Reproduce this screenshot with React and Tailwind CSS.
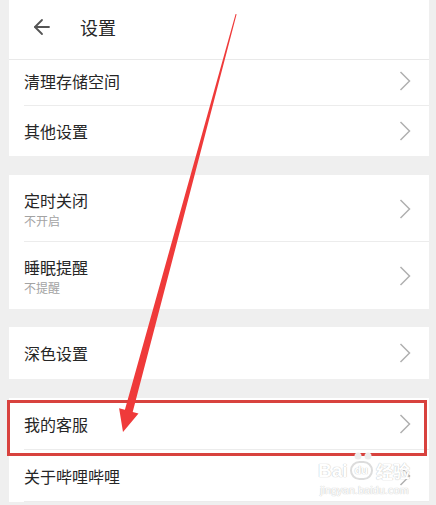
import { ArrowLeft } from "lucide-react";

const font = { fontFamily: '"Noto Sans CJK SC", "Noto Sans", sans-serif' };

const Chevron = () => (
  <svg width="12" height="20" viewBox="0 0 12 20" fill="none" className="shrink-0">
    <polyline points="1.5,1 10.5,10 1.5,19" stroke="#b0b0b0" strokeWidth="1.5" />
  </svg>
);

const Row = ({ title, sub, h, divider, pad = "" }) => (
  <div className={`relative flex items-center pl-[15px] pr-[18px] ${h} ${pad}`}>
    <div className="flex-1">
      <div className="text-[16px] leading-[22px] text-[#262626]">{title}</div>
      {sub && <div className="text-[12px] leading-[16px] mt-[2px] text-[#a3a3a3]">{sub}</div>}
    </div>
    <Chevron />
    {divider && <div className="absolute bottom-0 left-[15px] right-0 h-px bg-[#ececec]" />}
  </div>
);

export default function App() {
  return (
    <div className="relative h-[505px] overflow-hidden bg-[#efefef] pl-[9px] pr-[7px]" style={font}>
      <div className="bg-white">
        <div className="flex items-center h-[60px] pl-[21px] pb-[5px] border-b border-[#e9e9e9]">
          <ArrowLeft size={24} strokeWidth={1.8} className="text-[#555]" />
          <span className="ml-[26px] text-[18px] text-[#262626]">设置</span>
        </div>
        <Row title="清理存储空间" h="h-[46px]" pad="pb-[4px]" divider />
        <Row title="其他设置" h="h-[50px]" />
      </div>

      <div className="bg-white mt-[19px]">
        <Row title="定时关闭" sub="不开启" h="h-[67px]" divider />
        <Row title="睡眠提醒" sub="不提醒" h="h-[67px]" />
      </div>

      <div className="bg-white mt-[18px]">
        <Row title="深色设置" h="h-[52px]" />
      </div>

      <div className="bg-white mt-[19px]">
        <Row title="我的客服" h="h-[52px]" divider />
        <Row title="关于哔哩哔哩" h="h-[52px]" divider />
      </div>

      {/* annotation: red box */}
      <div className="absolute left-[7px] top-[400px] w-[420px] h-[56px] border-[3px] border-[#d8423e]" />

      {/* annotation: arrow */}
      <svg className="absolute left-0 top-0 pointer-events-none" width="436" height="505" viewBox="0 0 436 505">
        <polygon
          points="235.6,14 236.6,14.3 132.7,411.9 138.5,413.4 123,432 119.1,408.2 124.9,409.8"
          fill="#ef3a3a"
        />
      </svg>

      {/* watermark */}
      <div className="absolute left-[318px] top-[451px] flex flex-col items-start pointer-events-none">
        <svg width="20" height="10" viewBox="0 0 20 10" className="ml-[35px]">
          <circle cx="5" cy="5" r="3.5" fill="#ececec" />
          <circle cx="15" cy="5" r="3.5" fill="#ececec" />
        </svg>
        <div className="flex items-center gap-[2px] leading-none text-white [text-shadow:0_0_1px_#c8c8c8,0_0_1px_#c8c8c8]">
          <span className="text-[19px] font-bold" style={{ fontFamily: '"Liberation Sans", sans-serif' }}>Bai</span>
          <span
            className="rounded-full border-2 border-[#dcdcdc] text-[11px] font-bold px-[3px] py-[2px]"
            style={{ fontFamily: '"Liberation Sans", sans-serif' }}
          >
            du
          </span>
          <span className="text-[17px] font-bold ml-[1px]">经验</span>
        </div>
        <div
          className="text-[11px] leading-none text-white mt-[5px] ml-[2px] [text-shadow:0_0_1px_#c8c8c8,0_0_1px_#c8c8c8]"
          style={{ fontFamily: '"Liberation Sans", sans-serif' }}
        >
          jingyan.baidu.com
        </div>
      </div>
    </div>
  );
}
